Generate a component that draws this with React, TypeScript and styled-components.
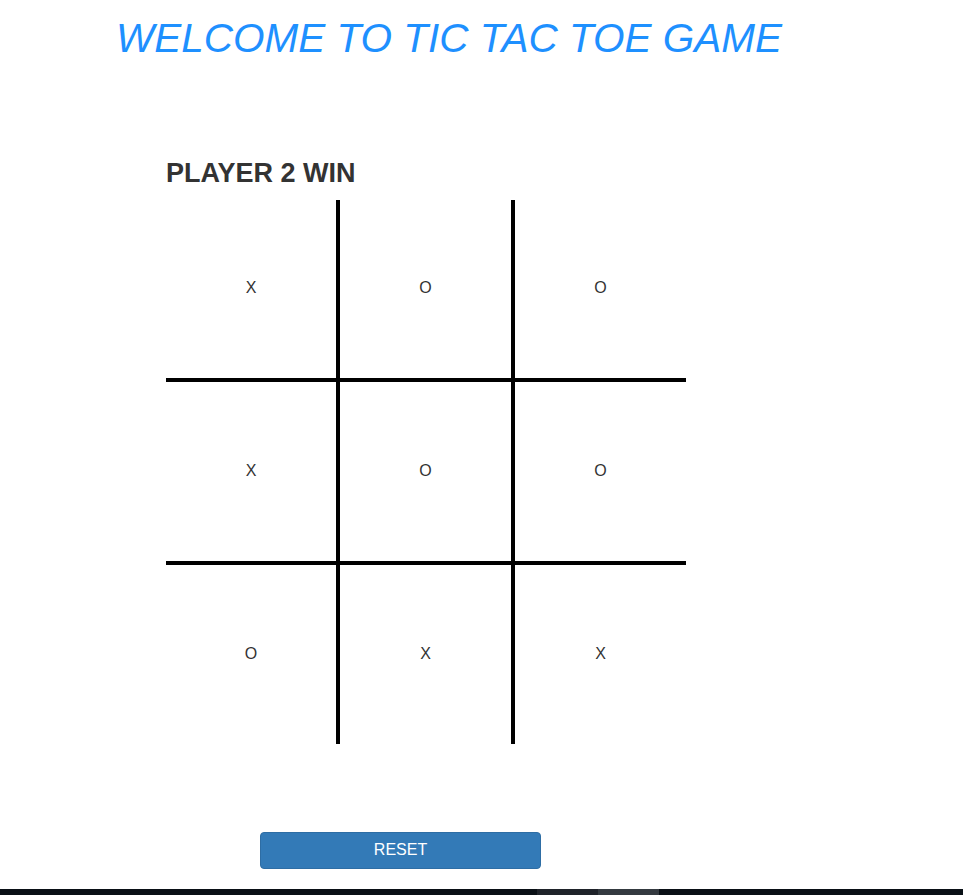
import React from "react";
import styled, { createGlobalStyle } from "styled-components";

const Global = createGlobalStyle`
  html, body { margin: 0; padding: 0; background: #fff; }
  body { font-family: "Liberation Sans", Arial, sans-serif; color: #333; }
  * { box-sizing: border-box; }
`;

const Page = styled.div`
  width: 963px;
  height: 895px;
  display: flex;
  flex-direction: column;
  overflow: hidden;
`;

const Title = styled.h1`
  margin: 15px 0 0 116px;
  font-size: 40.5px;
  line-height: 46px;
  font-weight: 400;
  font-style: italic;
  color: #1e90ff;
  white-space: nowrap;
`;

const Game = styled.section`
  margin: 97px 0 0 166px;
  display: flex;
  flex-direction: column;
`;

const Status = styled.h2`
  margin: 0;
  font-size: 27px;
  line-height: 30px;
  font-weight: 700;
  color: #333;
`;

const Board = styled.div`
  margin-top: 12px;
  width: 520px;
  display: grid;
  grid-template-columns: 170px 175px 175px;
  grid-template-rows: 178px 183px 183px;
`;

const Cell = styled.div<{ $left: boolean; $top: boolean }>`
  display: flex;
  align-items: center;
  justify-content: center;
  font-size: 16px;
  color: #333;
  padding-bottom: 2px;
  border-left: ${(p) => (p.$left ? "4px solid #000" : "none")};
  border-top: ${(p) => (p.$top ? "4px solid #000" : "none")};
`;

const ResetButton = styled.button`
  margin: 88px 0 0 260px;
  width: 281px;
  height: 37px;
  background: #337ab7;
  border: 1px solid #2e6da4;
  border-radius: 4px;
  color: #fff;
  font-family: "Liberation Sans", Arial, sans-serif;
  font-size: 16px;
  padding: 0 0 2px;
  cursor: pointer;
`;

const Spacer = styled.div`
  flex: 1;
`;

const Taskbar = styled.div`
  height: 6px;
  background: #0a1016;
  display: flex;
  padding-left: 537px;
`;

const TaskItem = styled.div<{ $shade: string }>`
  width: 61px;
  background: ${(p) => p.$shade};
`;

const cells = ["X", "O", "O", "X", "O", "O", "O", "X", "X"];

export default function App() {
  return (
    <>
      <Global />
      <Page>
        <Title>WELCOME TO TIC TAC TOE GAME</Title>
        <Game>
          <Status>PLAYER 2 WIN</Status>
          <Board>
            {cells.map((v, i) => (
              <Cell key={i} $left={i % 3 !== 0} $top={i >= 3}>
                {v}
              </Cell>
            ))}
          </Board>
        </Game>
        <ResetButton>RESET</ResetButton>
        <Spacer />
        <Taskbar>
          <TaskItem $shade="#1f232a" />
          <TaskItem $shade="#343a40" />
        </Taskbar>
      </Page>
    </>
  );
}
